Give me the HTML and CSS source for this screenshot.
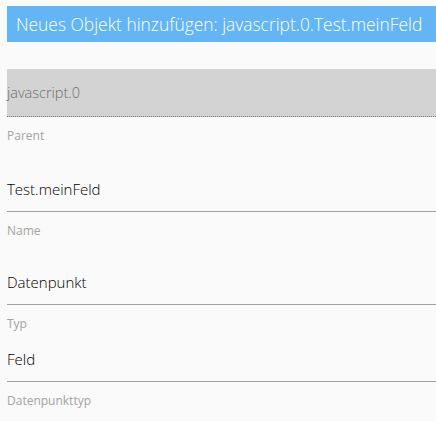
FILE: index.html
```html
<!DOCTYPE html>
<html lang="de">
<head>
<meta charset="utf-8">
<title>Neues Objekt hinzufügen</title>
<link rel="stylesheet" href="styles.css">
</head>
<body>
<div class="dialog">
  <div class="title">Neues Objekt hinzufügen: javascript.0.Test.meinFeld</div>
  <div class="parent-field">javascript.0</div>
  <div class="label label-parent">Parent</div>
  <div class="value value-name">Test.meinFeld</div>
  <div class="label">Name</div>
  <div class="value value-type">Datenpunkt</div>
  <div class="label">Typ</div>
  <div class="value value-state">Feld</div>
  <div class="label">Datenpunkttyp</div>
</div>
</body>
</html>
```

FILE: styles.css
```css
html, body {
  margin: 0;
  padding: 0;
  background: #fafafa;
}
body {
  font-family: "Open Sans", "Noto Sans", sans-serif;
  overflow: hidden;
}
.dialog {
  padding: 6px 0 0 7px;
  display: flex;
  flex-direction: column;
}
.title {
  height: 36px;
  line-height: 36px;
  background: #64b5f6;
  color: #ffffff;
  font-size: 17.4px;
  font-weight: 300;
  padding-left: 9px;
  white-space: nowrap;
}
.parent-field {
  margin-top: 27px;
  background: #d3d3d3;
  color: #6e6e6e;
  font-size: 14.5px;
  font-weight: 300;
  line-height: 18px;
  padding: 15px 0 14px 0;
  border-bottom: 1px dotted #7a7a7a;
}
.label {
  margin-top: 12px;
  font-size: 12px;
  line-height: 14px;
  color: #a3a3a3;
}
.value {
  font-size: 15px;
  font-weight: 300;
  line-height: 20px;
  color: #000000;
  padding-bottom: 12px;
  border-bottom: 1px solid #a0a0a0;
}
.value-name { margin-top: 36px; }
.value-type { margin-top: 34px; }
.value-state { margin-top: 18px; }
```
